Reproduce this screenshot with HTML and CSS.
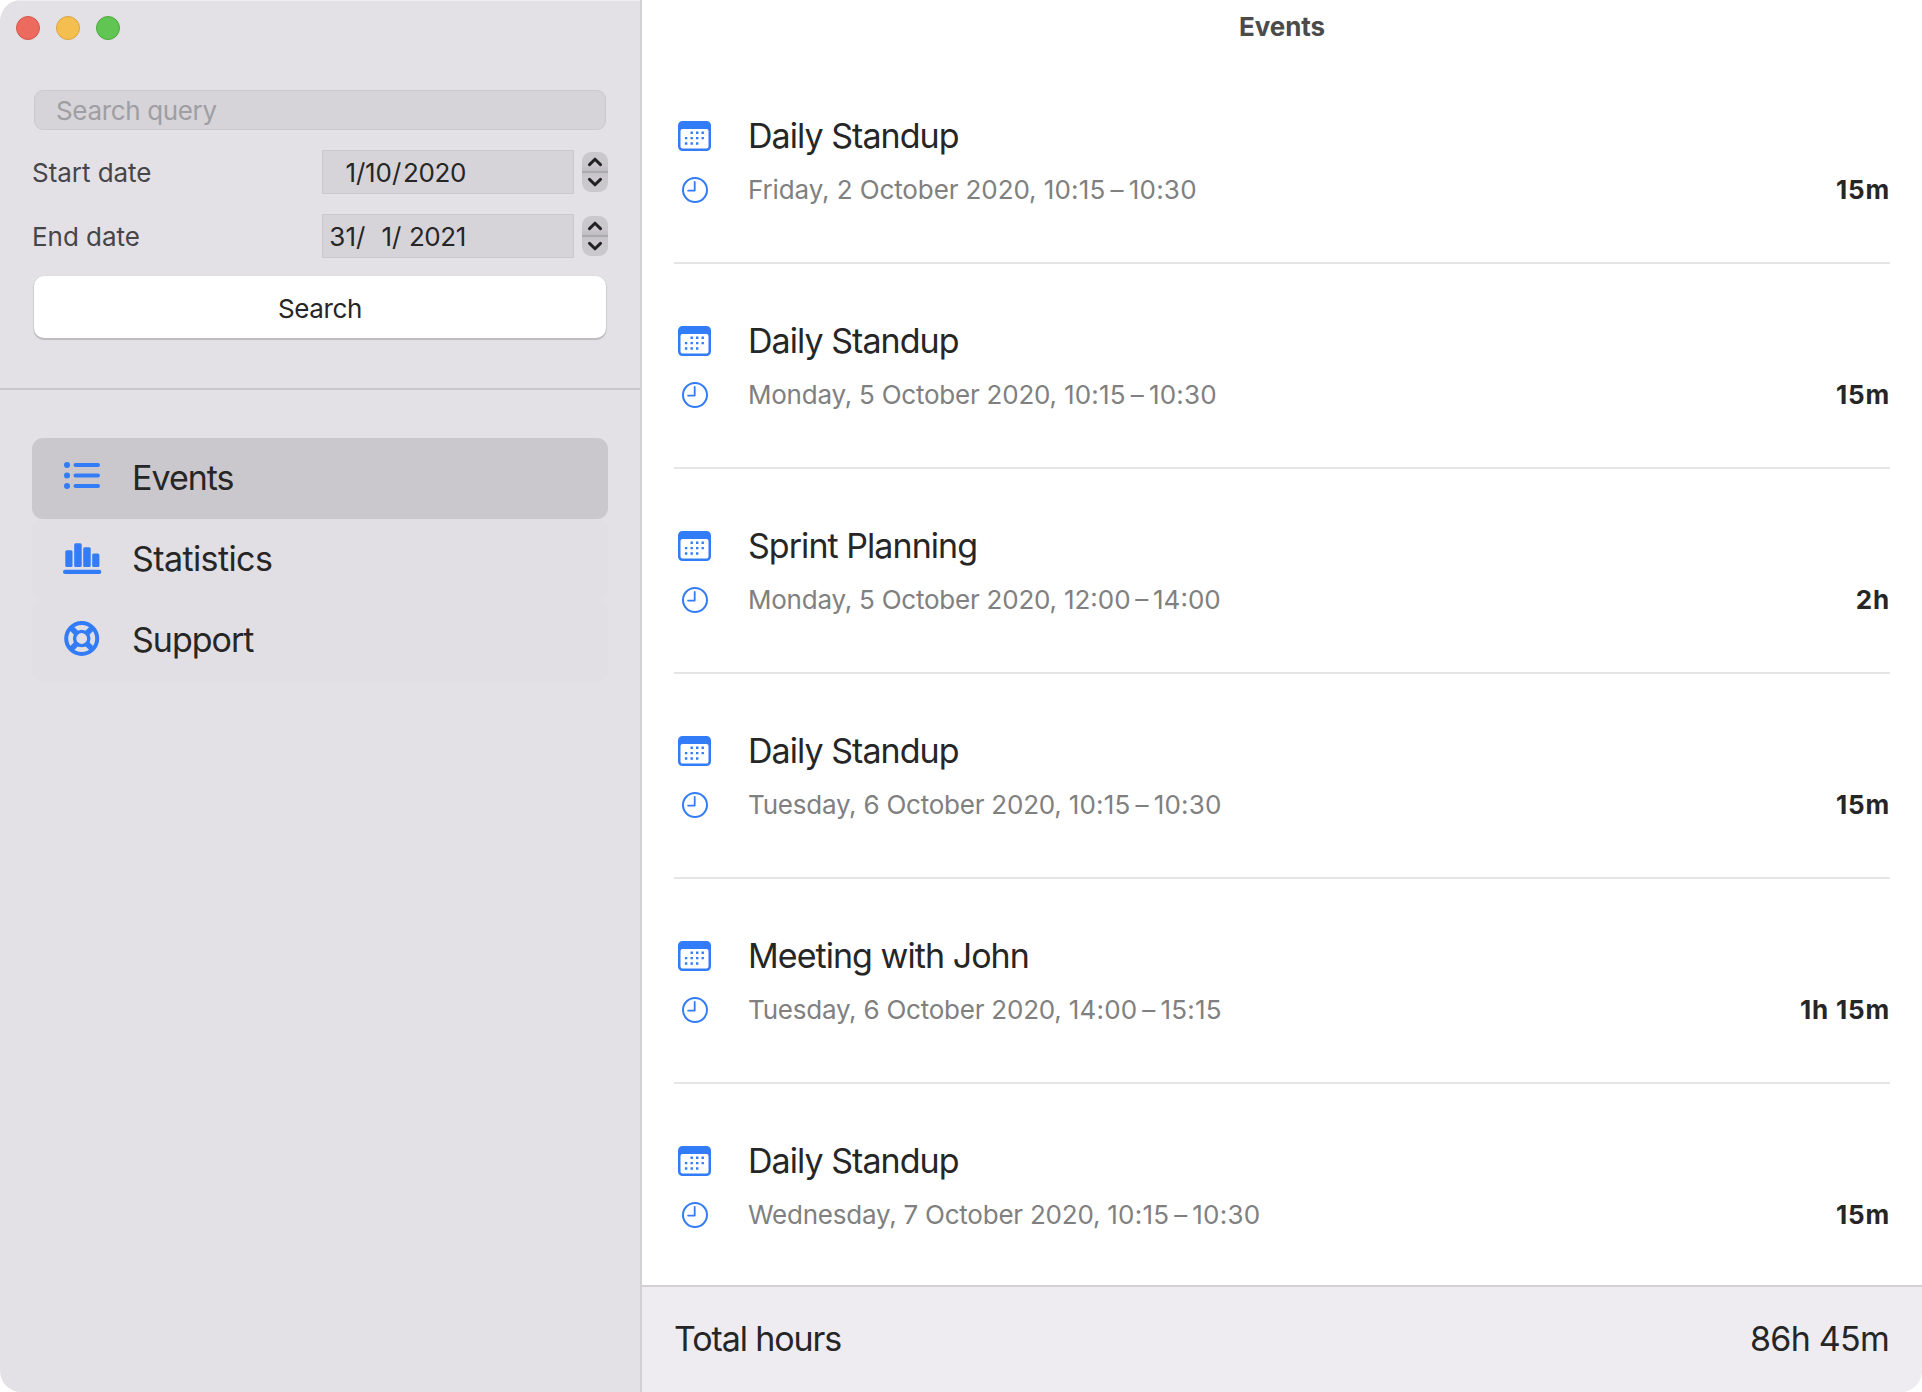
FILE: index.html
```html
<!DOCTYPE html>
<html lang="en">
<head>
<meta charset="utf-8">
<title>Events</title>
<link rel="stylesheet" href="styles.css">
</head>
<body>
<svg class="sprite" aria-hidden="true">
  <symbol id="calendar" viewBox="0 0 42 40">
    <path fill-rule="evenodd" d="M8.500 5h24a4.500 4.500 0 0 1 4.500 4.500v21a4.500 4.500 0 0 1-4.500 4.500h-24a4.500 4.500 0 0 1-4.500-4.500v-21a4.500 4.500 0 0 1 4.500-4.500zM8.500 13a2 2 0 0 0-2 2v15.500a2 2 0 0 0 2 2h24a2 2 0 0 0 2-2V15a2 2 0 0 0-2-2z"/>
    <path d="M16.500 15.500h2.400v2.400h-2.400zM22 15.500h2.400v2.400h-2.400zM27.500 15.500h2.400v2.400h-2.400zM10.900 20.900h2.400v2.400h-2.400zM16.500 20.900h2.400v2.400h-2.400zM22 20.900h2.400v2.400h-2.400zM27.500 20.900h2.400v2.400h-2.400zM10.900 26.300h2.400v2.400h-2.400zM16.500 26.300h2.400v2.400h-2.400zM22 26.300h2.400v2.400h-2.400z"/>
  </symbol>
  <symbol id="clock" viewBox="0 0 42 40">
    <g fill="none" stroke="currentColor" stroke-linecap="round" stroke-linejoin="round">
      <circle cx="21" cy="20" r="12" stroke-width="2"/>
      <path d="M20.700 12v8.600h-6.600" stroke-width="1.800"/>
    </g>
  </symbol>
  <symbol id="chevrons" viewBox="0 0 26 40">
    <path d="M7.500 12.600 13 7.200l5.500 5.400M7.500 27.400 13 32.800l5.500-5.400" fill="none" stroke="#222" stroke-width="3" stroke-linecap="round" stroke-linejoin="round"/>
  </symbol>
</svg>

<div class="window">
  <aside class="sidebar">
    <div class="lights"><i class="light red"></i><i class="light yellow"></i><i class="light green"></i></div>

    <div class="filters">
      <div class="query">Search query</div>
      <div class="date-row">
        <span class="label">Start date</span>
        <div class="date-field"><span class="part">1</span><span class="slash">/</span><span class="part">10</span><span class="slash">/</span><span class="year">2020</span></div>
        <div class="stepper"><svg><use href="#chevrons"/></svg></div>
      </div>
      <div class="date-row">
        <span class="label">End date</span>
        <div class="date-field"><span class="part">31</span><span class="slash">/</span><span class="part">1</span><span class="slash">/</span><span class="year">2021</span></div>
        <div class="stepper"><svg><use href="#chevrons"/></svg></div>
      </div>
      <div class="search-button">Search</div>
    </div>

    <nav class="nav">
      <div class="nav-item selected">
        <svg class="nav-icon" viewBox="0 0 42 81">
          <circle cx="5" cy="27" r="3"/><circle cx="5" cy="37.500" r="3"/><circle cx="5" cy="48" r="3"/>
          <path d="M13.500 27H36M13.500 37.500H36M13.500 48H36" stroke="currentColor" stroke-width="4" stroke-linecap="round"/>
        </svg>
        <span>Events</span>
      </div>
      <div class="nav-item">
        <svg class="nav-icon" viewBox="0 0 42 81">
          <rect x="3.300" y="31.300" width="7.200" height="16.700" rx="1.500"/>
          <rect x="12.200" y="24.300" width="7.500" height="23.700" rx="1.500"/>
          <rect x="21.200" y="28.200" width="7.500" height="19.800" rx="1.500"/>
          <rect x="30.200" y="34.400" width="7.200" height="13.600" rx="1.500"/>
          <rect x="1" y="50.700" width="38.300" height="4.300" rx="2.100"/>
        </svg>
        <span class="wide">Statistics</span>
      </div>
      <div class="nav-item">
        <svg class="nav-icon" viewBox="0 0 42 81">
          <g fill="none" stroke="currentColor">
            <circle cx="19.700" cy="38.500" r="15.500" stroke-width="4"/>
            <circle cx="19.700" cy="38.500" r="7.100" stroke-width="3.400"/>
            <path d="M14.500 33.300 9.500 28.300M24.900 33.300l5-5M14.500 43.700l-5 5M24.900 43.700l5 5" stroke-width="5.500"/>
          </g>
        </svg>
        <span>Support</span>
      </div>
    </nav>
  </aside>

  <main class="content">
    <header class="title">Events</header>
    <div class="events">
      <div class="event"><svg><use href="#calendar"/></svg><div class="name">Daily Standup</div><svg><use href="#clock"/></svg><div class="when loose">Friday, 2 October 2020, <span class="time">10:15&#8201;–&#8201;10:30</span></div><div class="duration">15m</div></div>
      <div class="event"><svg><use href="#calendar"/></svg><div class="name">Daily Standup</div><svg><use href="#clock"/></svg><div class="when">Monday, 5 October 2020, <span class="time">10:15&#8201;–&#8201;10:30</span></div><div class="duration">15m</div></div>
      <div class="event"><svg><use href="#calendar"/></svg><div class="name">Sprint Planning</div><svg><use href="#clock"/></svg><div class="when">Monday, 5 October 2020, <span class="time even">12:00&#8201;–&#8201;14:00</span></div><div class="duration">2h</div></div>
      <div class="event"><svg><use href="#calendar"/></svg><div class="name">Daily Standup</div><svg><use href="#clock"/></svg><div class="when">Tuesday, 6 October 2020, <span class="time">10:15&#8201;–&#8201;10:30</span></div><div class="duration">15m</div></div>
      <div class="event"><svg><use href="#calendar"/></svg><div class="name">Meeting with John</div><svg><use href="#clock"/></svg><div class="when">Tuesday, 6 October 2020, <span class="time">14:00&#8201;–&#8201;15:15</span></div><div class="duration">1h 15m</div></div>
      <div class="event"><svg><use href="#calendar"/></svg><div class="name">Daily Standup</div><svg><use href="#clock"/></svg><div class="when">Wednesday, 7 October 2020, <span class="time">10:15&#8201;–&#8201;10:30</span></div><div class="duration">15m</div></div>
    </div>
    <footer class="total"><span class="total-label">Total hours</span><span class="total-value">86h 45m</span></footer>
  </main>
</div>
</body>
</html>
```
FILE: styles.css
```css
* { box-sizing: border-box; }
html { background: #fff; }
body {
  margin: 0;
  font-family: Inter, "Liberation Sans", sans-serif;
  font-size: 26px;
  font-weight: 430;
  color: #262626;
}
svg { display: block; fill: currentColor; }
.sprite { display: none; }

.window {
  display: flex;
  width: 1922px;
  height: 1392px;
  border-radius: 21px;
  overflow: hidden;
  background: #fff;
}

/* Sidebar */
.sidebar {
  width: 642px;
  border-right: 2px solid #d2d0d5;
  background: #e3e1e6;
  box-shadow: inset 0 1px #efeef1;
}
.lights { display: flex; gap: 16px; padding: 16px 16px 0; }
.light { width: 24px; height: 24px; border-radius: 50%; border: 1px solid; }
.red { background: #ed6a5e; border-color: #d5564b; }
.yellow { background: #f5bf4f; border-color: #d9a441; }
.green { background: #61c554; border-color: #4fa73e; }

.filters {
  display: flex;
  flex-direction: column;
  height: 350px;
  padding: 50px 32px 0;
  border-bottom: 2px solid #c9c7cc;
}
.query {
  height: 40px;
  margin: 0 2px 20px;
  padding-left: 21px;
  border: 1px solid #cbc9ce;
  border-radius: 9px;
  background: #d6d4d9;
  color: #9f9ea3;
  line-height: 40px;
  letter-spacing: -0.35px;
}
.date-row {
  display: flex;
  align-items: center;
  height: 44px;
  margin-bottom: 20px;
}
.label { flex: 1; color: #464548; letter-spacing: -0.05px; }
.date-field {
  display: flex;
  width: 252px;
  height: 44px;
  padding-left: 5px;
  border: 1px solid #cbc9ce;
  background: #d6d4d9;
  line-height: 43px;
}
.part { width: 28px; text-align: right; }
.slash { width: 8px; text-align: center; }
.year { width: 66px; text-align: right; letter-spacing: -0.4px; }
.stepper {
  width: 26px;
  height: 40px;
  margin-left: 8px;
  border-radius: 9px;
  background: linear-gradient(#cac8cd 0 13px, #bfbdc2 19px, #adabb0 19px 21px, #c4c2c7 21px, #cac8cd 25px);
}
.stepper svg { width: 26px; height: 40px; }
.search-button {
  height: 62px;
  margin: -2px 2px 0;
  border-radius: 10px;
  background: #fff;
  box-shadow: 0 2px 0 #bfbdc1, 0 1px 1px 1px #cfcdd2;
  text-align: center;
  line-height: 66px;
  letter-spacing: -0.35px;
}

.nav { padding: 48px 32px 0; }
.nav-item {
  display: flex;
  height: 81px;
  padding-left: 30px;
  border-radius: 11px;
  background: #e1dfe4;
  font-size: 34px;
  line-height: 80px;
  letter-spacing: -1px;
}
.selected { background: #cac8cd; }
.nav-icon { width: 42px; height: 81px; margin-right: 28px; color: #327cf7; }
.wide { letter-spacing: -0.6px; }

/* Events list */
.content {
  display: flex;
  flex-direction: column;
  flex: 1;
}
.title {
  height: 59px;
  color: #4b4b4b;
  font-weight: 700;
  line-height: 54px;
  text-align: center;
  letter-spacing: -0.1px;
}
.events { flex: 1; padding: 0 32px; }
.event {
  display: grid;
  grid-template-columns: 42px 1fr auto;
  grid-template-rows: 40px 40px;
  column-gap: 32px;
  row-gap: 14px;
  height: 205px;
  padding-top: 57px;
  border-bottom: 2px solid #e5e5e5;
  line-height: 40px;
}
.event:last-child { height: 201px; border-bottom: 0; }
.event svg { width: 42px; height: 40px; color: #327cf7; }
.name { grid-column: 2 / 4; font-size: 34px; letter-spacing: -0.95px; }
.when { color: #808080; letter-spacing: -0.23px; }
.when.loose { letter-spacing: -0.1px; }
.time { letter-spacing: 0.22px; }
.time.even { letter-spacing: 0; }
.duration { font-weight: 700; letter-spacing: 0.8px; }

.total {
  display: flex;
  justify-content: space-between;
  height: 107px;
  padding: 0 32px;
  border-top: 2px solid #d2d0d5;
  background: #eeecf1;
  font-size: 34px;
  line-height: 103px;
}
.total-label { letter-spacing: -1.1px; }
.total-value { margin-right: 1px; letter-spacing: -0.75px; }
```
